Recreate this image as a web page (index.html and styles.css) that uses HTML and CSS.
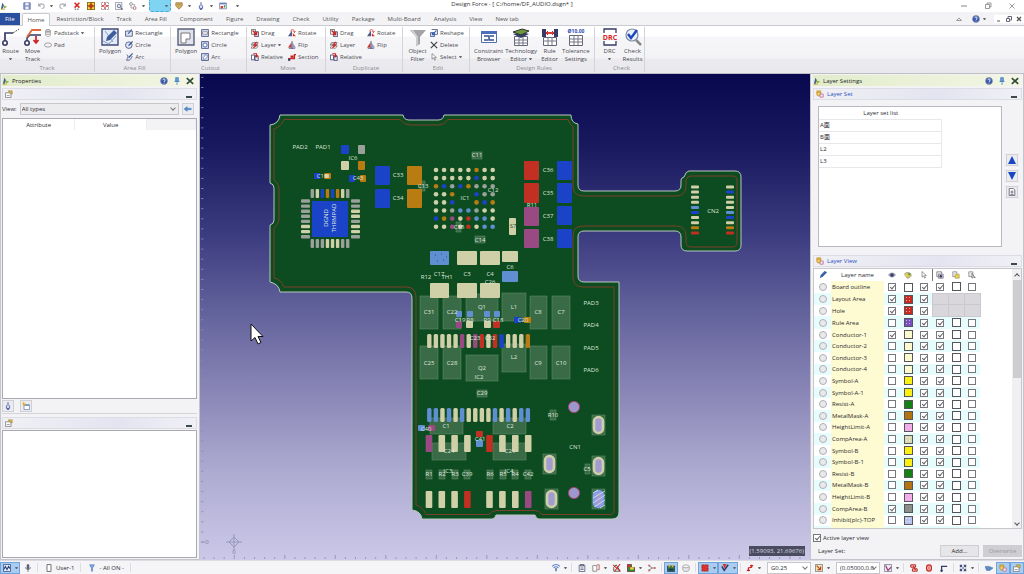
FILE: index.html
```html
<!DOCTYPE html>
<html lang="en">
<head>
    <meta charset="UTF-8">
    <title>Design Force</title>
    <link rel="stylesheet" href="styles.css">
</head>
<body>
    <svg class="sprite">
        <symbol id="i-logo" viewBox="0 0 10 10"><path d="M1 9l2-8 2 3-2 5z" fill="#3c5f9a"/><path d="M4 4l5 2-4 2z" fill="#8fae3a"/><path d="M1 9h5" stroke="#d8b23a" stroke-width="1.4"/></symbol>
        <symbol id="i-save" viewBox="0 0 10 10"><path d="M1 1h8v8H1z" fill="#8f9cc8" stroke="#5b6aa5"/><path d="M3 1h4v3H3zM3 6h4v3H3z" fill="#eef1fa"/></symbol>
        <symbol id="i-undo" viewBox="0 0 10 10"><path d="M2 2v3h3M2 5c2-4 7-3 7 0 0 2-1 3-3 3" fill="none" stroke="#a9a9b4" stroke-width="1.3"/></symbol>
        <symbol id="i-redo" viewBox="0 0 10 10"><path d="M8 2v3H5M8 5C6 1 1 2 1 5c0 2 1 3 3 3" fill="none" stroke="#a9a9b4" stroke-width="1.3"/></symbol>
        <symbol id="i-del" viewBox="0 0 10 10"><path d="M2 1l6 6M8 1L2 7" stroke="#d32a22" stroke-width="2"/><path d="M2 9h6" stroke="#333" stroke-dasharray="2 1"/></symbol>
        <symbol id="i-fit" viewBox="0 0 10 10"><path d="M0 0h10v10H0z" fill="#8a5a14"/><path d="M1 1h3v3H1zM6 1h3v3H6zM1 6h3v3H1zM6 6h3v3H6z" fill="#f4d23c"/><path d="M3 3h4v4H3z" fill="#c8281e"/></symbol>
        <symbol id="i-zoomall" viewBox="0 0 10 10"><path d="M.5.5h9v9h-9z" fill="#fff" stroke="#777" stroke-dasharray="2 1"/><path d="M5 1v8M1 5h8" stroke="#c33" stroke-width="1.6"/><path d="M4 4h2v2H4z" fill="#fff"/></symbol>
        <symbol id="i-find" viewBox="0 0 10 10"><path d="M.5.5h8v9h-8z" fill="#f5f6fa" stroke="#8a8fa3"/><circle cx="5" cy="5" r="2.2" fill="#dbe6f7" stroke="#667"/><path d="M7 7l2.500 2.500" stroke="#556" stroke-width="1.4"/></symbol>
        <symbol id="i-link" viewBox="0 0 10 10"><circle cx="2.500" cy="2.500" r="1.800" fill="none" stroke="#888"/><circle cx="7" cy="7.500" r="1.800" fill="none" stroke="#a55"/><path d="M2.500 4.500v3h2.500M5 3h2v2" fill="none" stroke="#999"/></symbol>
        <symbol id="i-shield" viewBox="0 0 10 10"><path d="M1 1h8v4L5 9 1 5z" fill="#c9b25a" stroke="#b06c54"/><path d="M3 3h4" stroke="#a5a04c" stroke-width="2"/></symbol>
        <symbol id="i-pin" viewBox="0 0 10 10"><path d="M5 0v3L3 5v3h4V5L5 3" fill="#dfe4f6" stroke="#3f4fa0"/><path d="M5 8v2" stroke="#3f4fa0" stroke-width="2"/></symbol>
        <symbol id="i-win" viewBox="0 0 10 10"><path d="M.5 1.500h9v7h-9z" fill="#fff" stroke="#6a83b8"/><path d="M1 2h8" stroke="#6a83b8" stroke-width="2"/><path d="M2 5h3v3H2z" fill="#d33"/><path d="M6 4h2v3H6z" fill="#3a9a4a"/></symbol>
        <symbol id="i-help" viewBox="0 0 10 10"><circle cx="5" cy="5" r="4.300" fill="#2f51a8" stroke="#8b95b5"/><path d="M3.500 4c0-2 3-2 3-.2C6.500 5 5 5 5 6.200M5 7v1" fill="none" stroke="#fff" stroke-width="1.200"/></symbol>
        <symbol id="i-tack" viewBox="0 0 10 10"><path d="M3 1h4v4H3z" fill="#7fb0e0"/><path d="M3 1h4M3.700 1v4M6.300 1v4M2 5.500h6" stroke="#4f86c4" stroke-width="1.400"/><path d="M5 6v4" stroke="#4f86c4"/></symbol>
        <symbol id="i-x" viewBox="0 0 10 10"><path d="M1 1.500l8 7M9 1.500l-8 7" stroke="#2c4a35" stroke-width="2"/></symbol>
        <symbol id="i-prop" viewBox="0 0 10 10"><path d="M.5 3.500h7v6h-7z" fill="#fff" stroke="#777"/><path d="M4 1h5v4L6 4z" fill="#d9b84a" stroke="#8a7a30" stroke-width=".6"/><path d="M2 7h4" stroke="#888"/></symbol>
        <symbol id="i-layers" viewBox="0 0 10 10"><path d="M1 1h5v3H1z" fill="#f2c23c" stroke="#a07820" stroke-width=".6"/><circle cx="3.500" cy="5" r="2.500" fill="#f6d45a" stroke="#b98a2a"/><path d="M5 5h4v4H5z" fill="#e9edf8" stroke="#c36a8a"/></symbol>
        <symbol id="i-hand" viewBox="0 0 10 10"><path d="M0 5l4-3v2h5v2H4v2z" fill="#4c8fd0" stroke="#3a6ea8" stroke-width=".5"/></symbol>
        <symbol id="i-new" viewBox="0 0 10 10"><path d="M2.500 3.500h7v6h-7z" fill="#fff" stroke="#6b86b4"/><path d="M3 4h6" stroke="#6b86b4" stroke-width="1.500"/><path d="M2 0v5M0 2.500h5" stroke="#e4b92d" stroke-width="1.500"/></symbol>

        <symbol id="i-route" viewBox="0 0 18 18"><circle cx="3" cy="15" r="2.200" fill="#fff" stroke="#353a66" stroke-width="1.600"/><path d="M3 13V5h8" fill="none" stroke="#353a66" stroke-width="1.700"/><path d="M11 5l6-4" stroke="#555" stroke-dasharray="2 1"/></symbol>
        <symbol id="i-move" viewBox="0 0 18 18"><circle cx="3" cy="15" r="2.200" fill="#fff" stroke="#353a66" stroke-width="1.600"/><path d="M3 13v-3l3-3h11" fill="none" stroke="#353a66" stroke-width="1.500"/><path d="M3 9l5-7h9" fill="none" stroke="#e0683a" stroke-width="1.800"/><path d="M12 8v7M9.500 12l2.500 3 2.500-3" fill="none" stroke="#d02020" stroke-width="1.700"/></symbol>
        <symbol id="i-poly" viewBox="0 0 18 18"><path d="M1 1h16v16H1z" fill="#e3ebf6" stroke="#414a7a" stroke-width="1.400"/><path d="M4 3l8 11M2 13l6 3 7-8" fill="none" stroke="#88a0c8"/><path d="M13 2l3 3-7 7-4 1 1-4z" fill="#3c5c9c"/></symbol>
        <symbol id="i-cut" viewBox="0 0 18 18"><path d="M1 1h16v16H1z" fill="#dfe3ee" stroke="#5a6078" stroke-width="1.400"/><path d="M4 5h9v6H9v4H4z" fill="#fff" stroke="#777"/></symbol>
        <symbol id="i-filter" viewBox="0 0 18 18"><path d="M1 2h16l-6 7v7l-4 2V9z" fill="#a3a3a8"/><path d="M3 2l5 7v8" fill="none" stroke="#d8d8dc" stroke-width="1.500"/></symbol>
        <symbol id="i-cons" viewBox="0 0 18 18"><path d="M1.500 3.500h15v11h-15z" fill="#fff" stroke="#5570b0"/><path d="M1 3h16v3H1z" fill="#4c70bd"/><path d="M4 8h5v4h5M4 12h4M10 8h4" fill="none" stroke="#33508c" stroke-width="1.500"/></symbol>
        <symbol id="i-tech" viewBox="0 0 18 18"><path d="M2.500 8.500h13v9h-13z" fill="#fff" stroke="#667"/><path d="M2 12h14M2 15h14M7 8v9M11 8v9" stroke="#778"/><path d="M1 6l9-2 7 2-8 4z" fill="#33406c"/><path d="M1 4l9-3 7 2-8 4z" fill="#6e9a3d" stroke="#333"/></symbol>
        <symbol id="i-rule" viewBox="0 0 18 18"><path d="M1 1h4v8H1zM13 1h4v8h-4z" fill="#353a66"/><path d="M5 5h8" stroke="#d42a22" stroke-width="1.800"/><path d="M7 3L5 5l2 2M11 3l2 2-2 2" fill="none" stroke="#d42a22"/><path d="M2.500 9.500h13v8h-13z" fill="#fff" stroke="#667"/><path d="M2 13h14M7 9v8M11 9v8" stroke="#778"/></symbol>
        <symbol id="i-check" viewBox="0 0 18 18"><circle cx="8" cy="7" r="6" fill="#eaf1fb" stroke="#7f8ca6" stroke-width="1.200"/><path d="M12 12l5 5" stroke="#888" stroke-width="2.500"/><path d="M4 6l3 4 6-8" fill="none" stroke="#1d48b8" stroke-width="2.400"/></symbol>

        <symbol id="i-padstack" viewBox="0 0 10 10"><ellipse cx="5" cy="2" rx="3" ry="1.300" fill="#ddd" stroke="#888"/><path d="M2 4c1 1 5 1 6 0M2 6c1 1 5 1 6 0M2 8c1 1.500 5 1.500 6 0M2 2v6M8 2v6" fill="none" stroke="#999"/></symbol>
        <symbol id="i-pad" viewBox="0 0 10 10"><ellipse cx="5" cy="5" rx="4.400" ry="2.600" fill="#f6f6fa" stroke="#8a8a96"/></symbol>
        <symbol id="i-srect" viewBox="0 0 10 10"><path d="M.7 2.500h8.500v6.500H.7z" fill="#dfe8f6" stroke="#414a7a"/><path d="M8 0L4 5 3 7l2-1 4-5z" fill="#3c5c9c"/></symbol>
        <symbol id="i-scirc" viewBox="0 0 10 10"><circle cx="4.800" cy="5.200" r="4.100" fill="#dfe8f6" stroke="#414a7a"/><path d="M9 0L5 4 4 6.500l2-1L10 1z" fill="#3c5c9c"/></symbol>
        <symbol id="i-sarc" viewBox="0 0 10 10"><path d="M2 2c3 2 1 4 0 7 5 1 6-3 7-5" fill="#dfe8f6" stroke="#414a7a"/><path d="M9 0L5 4 4 6.500l2-1L10 1z" fill="#3c5c9c"/></symbol>
        <symbol id="i-crect" viewBox="0 0 10 10"><path d="M.7.7h8.600v8.600H.7z" fill="#d6def0" stroke="#414a7a"/><path d="M2 3.500h6v3H2z" fill="#fff" stroke="#556" stroke-width=".7"/></symbol>
        <symbol id="i-ccirc" viewBox="0 0 10 10"><path d="M.7.7h8.600v8.600H.7z" fill="#d6def0" stroke="#414a7a"/><circle cx="5" cy="5" r="2.600" fill="#fff" stroke="#3452a0"/></symbol>
        <symbol id="i-carc" viewBox="0 0 10 10"><path d="M.7.7h8.600v8.600H.7z" fill="#d6def0" stroke="#414a7a"/><path d="M3 8C2 4 5 6 5 2l3 1c0 3-2 5-5 5z" fill="#fff" stroke="#3452a0" stroke-width=".7"/></symbol>
        <symbol id="i-drag" viewBox="0 0 10 10"><path d="M.5.5h5v6h-5z" fill="#fff" stroke="#555"/><path d="M4.500 3.500h5v6h-5z" fill="#e6ebf6" stroke="#353a66"/><path d="M2 2l5 5M7 3.500V7H3.500" fill="none" stroke="#d2201c" stroke-width="1.800"/></symbol>
        <symbol id="i-layer" viewBox="0 0 10 10"><path d="M2 2h7L7 5H0z" fill="#c9cfe0" stroke="#444" stroke-width=".7"/><path d="M2 6h7L7 9H0z" fill="#fff" stroke="#444" stroke-width=".7"/><path d="M7 1L4 5h3L3 8.500" fill="none" stroke="#d2201c" stroke-width="1.500"/></symbol>
        <symbol id="i-rel" viewBox="0 0 10 10"><path d="M.5 2.500h4v6h-4z" fill="#fff" stroke="#353a66"/><path d="M5 4h4v5.500H5z" fill="#e6ebf6" stroke="#353a66"/><path d="M3 1h4v3M5.500 3L7 5l1.500-2" fill="none" stroke="#d2201c" stroke-width="1.300"/></symbol>
        <symbol id="i-rot" viewBox="0 0 10 10"><path d="M5 2v7H0z" fill="#52598a"/><path d="M6 5l4 4H6z" fill="#d2342c"/><path d="M3 3c1-3 5-3 5 1M9.500 3L8 4.500 6.500 3" fill="none" stroke="#d2201c"/></symbol>
        <symbol id="i-flip" viewBox="0 0 10 10"><path d="M4.300 2v6H0z" fill="#d2342c"/><path d="M5.700 2v6H10z" fill="#9aa0c4"/><path d="M5 0v10M1 9h8" stroke="#353a66"/></symbol>
        <symbol id="i-sect" viewBox="0 0 10 10"><path d="M1 9V7h3V4h2V7h2V2h2" fill="none" stroke="#c9241e" stroke-width="1.700"/><circle cx="1.500" cy="8.500" r="1.500" fill="#353a66"/></symbol>
        <symbol id="i-reshape" viewBox="0 0 10 10"><path d="M2 .7h7.300v6H6" fill="none" stroke="#414a7a"/><path d="M.7 4.500h5v5h-5z" fill="#dfe8f6" stroke="#414a7a"/><path d="M8 2L3 7M3 4.500V7h2.500" fill="none" stroke="#2e62b8" stroke-width="1.400"/></symbol>
        <symbol id="i-delete" viewBox="0 0 10 10"><path d="M1 1l8 8M9 1L1 9" stroke="#444" stroke-width="1.500"/></symbol>
        <symbol id="i-cursor" viewBox="0 0 10 10"><path d="M2.500.7v7l2-1.700 1.300 3 1-.5L5.700 5.700h2.300z" fill="#fff" stroke="#666" stroke-width=".8"/></symbol>

        <symbol id="i-eye" viewBox="0 0 10 10"><path d="M0 5c3-4 7-4 10 0-3 4-7 4-10 0z" fill="#aab"/><circle cx="5" cy="5" r="2.300" fill="#3a3f6c"/></symbol>
        <symbol id="i-pal" viewBox="0 0 10 10"><path d="M1 4c0-3 8-3 8 1 0 3-3 4-5 4 0-2-3-2-3-5z" fill="#d8c65a" stroke="#998"/><path d="M5 3h3v2H5z" fill="#5a9a3c"/><path d="M2 4h2v2H2z" fill="#e8e26a"/></symbol>
        <symbol id="i-pen" viewBox="0 0 10 10"><path d="M9 1L7 0 2 5 1 9l4-2 5-5z" fill="#3b62a4"/></symbol>
        <symbol id="i-seteye" viewBox="0 0 10 10"><path d="M1 1h6v6H1z" fill="#eee" stroke="#777"/><path d="M3 4h6v5H3z" fill="#ccd" stroke="#778"/><circle cx="6" cy="6.500" r="1.500" fill="#335"/></symbol>
        <symbol id="i-setpal" viewBox="0 0 10 10"><path d="M1 1h5v6H1z" fill="#eee" stroke="#888"/><path d="M4 4h5v5H4z" fill="#e8cf50" stroke="#b8a860"/></symbol>
        <symbol id="i-setcur" viewBox="0 0 10 10"><path d="M1 1h5v6H1z" fill="#eee" stroke="#888"/><path d="M5 3v6l2-1.500 2 1z" fill="#fff" stroke="#666"/></symbol>

        <symbol id="i-panel" viewBox="0 0 10 10"><path d="M.5.500h9v9h-9z" fill="#e8effa" stroke="#2c4680"/><path d="M1 7l2-4 2 4 2-4 2 3" fill="none" stroke="#2c4680" stroke-width="1.400"/></symbol>
        <symbol id="i-mic" viewBox="0 0 10 10"><path d="M4 1h2v5H4z" fill="#4a5178" stroke="#4a5178"/><path d="M2 4c0 4 6 4 6 0M5 7v3" fill="none" stroke="#666"/></symbol>
        <symbol id="i-user" viewBox="0 0 10 10"><path d="M2.500.7h5v8.600h-5z" fill="#fff" stroke="#555"/></symbol>
        <symbol id="i-y" viewBox="0 0 10 10"><path d="M2 1h6L5.700 5v4H4.300V5z" fill="#7da7dc" stroke="#4a74b4" stroke-width=".7"/></symbol>
        <symbol id="i-wifi" viewBox="0 0 10 10"><path d="M0 3c3-3 7-3 10 0M2 5c2-2 4-2 6 0" fill="none" stroke="#5c86c8" stroke-width="1.400"/><path d="M5 5v4" stroke="#3b5a98" stroke-width="1.600"/></symbol>
        <symbol id="i-clip" viewBox="0 0 10 10"><path d="M1.500 1.500h7v8h-7z" fill="#fff" stroke="#4a5070"/><path d="M3 .5h4v2H3zM3 5h4M3 7h4" fill="none" stroke="#4a5070"/></symbol>
        <symbol id="i-doc" viewBox="0 0 10 10"><path d="M1 2h5v7H1z" fill="#fff" stroke="#777"/><path d="M6 1h3v6H7" fill="none" stroke="#c44"/></symbol>
        <symbol id="i-cross" viewBox="0 0 10 10"><path d="M1 9V4l3-3 5 8z" fill="#fff" stroke="#333"/><path d="M0 1l9 8M9 0L2 9" stroke="#c8241e" stroke-width="1.300"/></symbol>
        <symbol id="i-area" viewBox="0 0 10 10"><path d="M.5.500h5v4h4v5h-9z" fill="#2c8a3c" stroke="#6b2a20"/><path d="M4 4h4.500v3H4z" fill="#f2d03c"/><path d="M1 1h3v3H1z" fill="#d8302a"/></symbol>
        <symbol id="i-net" viewBox="0 0 10 10"><path d="M1 2l4 3-4 3M5 5h4" fill="none" stroke="#666"/><circle cx="1.500" cy="2" r="1.300" fill="#c66"/><circle cx="1.500" cy="8" r="1.300" fill="#c66"/><circle cx="8.500" cy="5" r="1.300" fill="#c66"/></symbol>
        <symbol id="i-brd" viewBox="0 0 10 10"><path d="M.5 2.500h9v7h-9z" fill="#2e7a3c" stroke="#24386c"/><path d="M2 1h2v3H2zM6 1h2v3H6z" fill="#e0b838"/><path d="M2 6h6v2H2z" fill="#20305c"/></symbol>
        <symbol id="i-disk" viewBox="0 0 10 10"><path d="M1 3v4c0 3 8 3 8 0V3" fill="#e8e8ec" stroke="#999"/><ellipse cx="5" cy="3" rx="4" ry="1.800" fill="#fafafa" stroke="#999"/></symbol>
        <symbol id="i-redsel" viewBox="0 0 10 10"><path d="M1 1h8v8H1z" fill="#d8332c" stroke="#8c1c1c" stroke-dasharray="1 1"/></symbol>
        <symbol id="i-redv" viewBox="0 0 10 10"><path d="M1 3l3 5 5-7" fill="none" stroke="#353a66" stroke-width="2"/><path d="M2 0h5L4.500 6z" fill="#d8332c"/></symbol>
        <symbol id="i-zig" viewBox="0 0 10 10"><path d="M7 1v3L3 5v4M5 2h4M1 8h4" fill="none" stroke="#c8241e" stroke-width="1.500"/></symbol>
        <symbol id="i-snap" viewBox="0 0 10 10"><path d="M.5.5h9v9h-9z" fill="#f2e7bb" stroke="#777"/><path d="M2 2l5 5M7 3v4H3" fill="none" stroke="#b8481e" stroke-width="1.500"/></symbol>
        <symbol id="i-snap2" viewBox="0 0 10 10"><path d="M.5.5h9v9h-9z" fill="#e7ebf8" stroke="#778"/><path d="M2 2l3 6 4-4" fill="none" stroke="#a23270" stroke-width="1.500"/></symbol>
        <symbol id="i-red1" viewBox="0 0 10 10"><path d="M1 1h6v3H1zM3 6h6v3H3zM4 2l3 6" fill="#f3c9c5" stroke="#b8211c" stroke-width="1.200"/></symbol>
        <symbol id="i-red2" viewBox="0 0 10 10"><rect x="2" y="1" width="6" height="8" rx="3" fill="#f3c9c5" stroke="#c8241e" stroke-width="1.500"/><path d="M5 3v4" stroke="#c8241e"/></symbol>
        <symbol id="i-corner" viewBox="0 0 10 10"><path d="M2 9V3h7" fill="none" stroke="#353a66" stroke-width="1.600"/><circle cx="2" cy="8.500" r="1.500" fill="#353a66"/></symbol>
        <symbol id="i-star" viewBox="0 0 10 10"><path d="M1 1h3v2L3 4H1zM9 1H6v2l1 1h2zM1 9h3V7L3 6H1zM9 9H6V7l1-1h2z" fill="#46507a"/><path d="M5 4v2M4 5h2" stroke="#46507a"/></symbol>
        <symbol id="i-point" viewBox="0 0 10 10"><path d="M0 3h5l5 2-4 3H2z" fill="#5b8cc6" stroke="#3a6298" stroke-width=".6"/></symbol>
        <symbol id="i-page" viewBox="0 0 10 10"><path d="M1.500.5h5l2 2v7h-7z" fill="#fff" stroke="#556"/><path d="M3 5h4M5 3v4M3 8h4" stroke="#556"/></symbol>
    </svg>

    <header class="titlebar">
        <div class="quick">
            <svg class="ico"><use href="#i-logo"/></svg>
            <button class="q first" aria-label="Save"><svg class="ico"><use href="#i-save"/></svg></button>
            <button class="q drop" aria-label="Undo"><svg class="ico"><use href="#i-undo"/></svg><i class="caret"></i></button>
            <button class="q" aria-label="Redo"><svg class="ico"><use href="#i-redo"/></svg></button>
            <button class="q" aria-label="Clear"><svg class="ico"><use href="#i-del"/></svg></button>
            <button class="q" aria-label="Fit"><svg class="ico"><use href="#i-fit"/></svg></button>
            <button class="q" aria-label="Zoom all"><svg class="ico"><use href="#i-zoomall"/></svg></button>
            <button class="q" aria-label="Find"><svg class="ico"><use href="#i-find"/></svg></button>
            <button class="q drop" aria-label="Link"><svg class="ico"><use href="#i-link"/></svg><i class="caret"></i></button>
            <button class="q drop hot" aria-label="Highlight"><i class="caret"></i></button>
            <button class="q drop" aria-label="Shield"><svg class="ico"><use href="#i-shield"/></svg><i class="caret"></i></button>
            <button class="q drop" aria-label="Marker"><svg class="ico"><use href="#i-pin"/></svg><i class="caret"></i></button>
            <button class="q" aria-label="Window"><svg class="ico"><use href="#i-win"/></svg></button>
            <button class="q" aria-label="More"><i class="caret"></i></button>
        </div>
        <h1>Design Force - [ C:/home/DF_AUDIO.dsgn* ]</h1>
        <div class="winbtns">
            <button aria-label="Minimize"><svg class="ico"><path d="M1 4h6" stroke="#888"/></svg></button>
            <button aria-label="Restore"><svg class="ico"><path d="M1.500 2.500h4v4h-4zM3 2V1h4v4H6" fill="none" stroke="#999"/></svg></button>
            <button aria-label="Close"><svg class="ico"><path d="M1.500 1.500l5 5M6.500 1.500l-5 5" stroke="#999"/></svg></button>
        </div>
    </header>

    <nav class="tabs">
        <a class="file" href="#">File</a>
        <a class="on" href="#">Home</a>
        <a href="#">Restriction/Block</a>
        <a href="#">Track</a>
        <a href="#">Area Fill</a>
        <a href="#">Component</a>
        <a href="#">Figure</a>
        <a href="#">Drawing</a>
        <a href="#">Check</a>
        <a href="#">Utility</a>
        <a href="#">Package</a>
        <a href="#">Multi-Board</a>
        <a href="#">Analysis</a>
        <a href="#">View</a>
        <a href="#">New tab</a>
        <div class="mdi">
            <button aria-label="Collapse"><svg class="ico"><path d="M1.500 5.500L4 3l2.500 2.500z" fill="none" stroke="#999"/></svg></button>
            <button class="wide" aria-label="Help"><svg class="ico"><use href="#i-help"/></svg><i class="caret"></i></button>
            <button class="box" aria-label="Minimize document"><svg class="ico"><path d="M2 6h3" stroke="#555"/></svg></button>
            <button class="box" aria-label="Restore document"><svg class="ico"><path d="M1.500 3.500h3v3h-3zM3 3V1.500h3.500V5H5" fill="none" stroke="#667"/></svg></button>
            <button class="box" aria-label="Close document"><svg class="ico"><path d="M2 2l4 4M6 2L2 6" stroke="#555" stroke-width="1.300"/></svg></button>
        </div>
    </nav>

    <div class="ribbon">
        <section class="group g-track">
            <div class="tools">
                <button class="big"><svg><use href="#i-route"/></svg>Route<i class="caret"></i></button>
                <button class="big"><svg><use href="#i-move"/></svg>Move<br>Track</button>
                <div class="stack">
                    <button><svg class="ico"><use href="#i-padstack"/></svg>Padstack<i class="caret"></i></button>
                    <button><svg class="ico"><use href="#i-pad"/></svg>Pad</button>
                </div>
            </div>
            <h2>Track</h2>
        </section>
        <section class="group g-fill">
            <div class="tools">
                <button class="big"><svg><use href="#i-poly"/></svg>Polygon</button>
                <div class="stack">
                    <button><svg class="ico"><use href="#i-srect"/></svg>Rectangle</button>
                    <button><svg class="ico"><use href="#i-scirc"/></svg>Circle</button>
                    <button><svg class="ico"><use href="#i-sarc"/></svg>Arc</button>
                </div>
            </div>
            <h2>Area Fill</h2>
        </section>
        <section class="group g-fill">
            <div class="tools">
                <button class="big"><svg><use href="#i-cut"/></svg>Polygon</button>
                <div class="stack">
                    <button><svg class="ico"><use href="#i-crect"/></svg>Rectangle</button>
                    <button><svg class="ico"><use href="#i-ccirc"/></svg>Circle</button>
                    <button><svg class="ico"><use href="#i-carc"/></svg>Arc</button>
                </div>
            </div>
            <h2>Cutout</h2>
        </section>
        <section class="group g-move">
            <div class="tools">
                <div class="stack">
                    <button><svg class="ico"><use href="#i-drag"/></svg>Drag</button>
                    <button><svg class="ico"><use href="#i-layer"/></svg>Layer<i class="caret"></i></button>
                    <button><svg class="ico"><use href="#i-rel"/></svg>Relative</button>
                </div>
                <div class="stack">
                    <button><svg class="ico"><use href="#i-rot"/></svg>Rotate</button>
                    <button><svg class="ico"><use href="#i-flip"/></svg>Flip</button>
                    <button><svg class="ico"><use href="#i-sect"/></svg>Section</button>
                </div>
            </div>
            <h2>Move</h2>
        </section>
        <section class="group g-dup">
            <div class="tools">
                <div class="stack">
                    <button><svg class="ico"><use href="#i-drag"/></svg>Drag</button>
                    <button><svg class="ico"><use href="#i-layer"/></svg>Layer</button>
                    <button><svg class="ico"><use href="#i-rel"/></svg>Relative</button>
                </div>
                <div class="stack">
                    <button><svg class="ico"><use href="#i-rot"/></svg>Rotate</button>
                    <button><svg class="ico"><use href="#i-flip"/></svg>Flip</button>
                </div>
            </div>
            <h2>Duplicate</h2>
        </section>
        <section class="group g-edit">
            <div class="tools">
                <button class="big"><svg><use href="#i-filter"/></svg>Object<br>Filter</button>
                <div class="stack">
                    <button><svg class="ico"><use href="#i-reshape"/></svg>Reshape</button>
                    <button><svg class="ico"><use href="#i-delete"/></svg>Delete</button>
                    <button><svg class="ico"><use href="#i-cursor"/></svg>Select<i class="caret"></i></button>
                </div>
            </div>
            <h2>Edit</h2>
        </section>
        <section class="group g-rules">
            <div class="tools">
                <button class="big"><svg><use href="#i-cons"/></svg>Constraint<br>Browser</button>
                <button class="big"><svg><use href="#i-tech"/></svg>Technology<span>Editor<i class="caret"></i></span></button>
                <button class="big"><svg><use href="#i-rule"/></svg>Rule<br>Editor</button>
                <button class="big"><svg viewBox="0 0 18 18"><text class="tol" x="9" y="5">Ø10.00</text><path d="M2.500 7.500h13v10h-13z" fill="#fff" stroke="#667"/><path d="M2 11h14M2 14h14M7 7v10M11 7v10" stroke="#778"/></svg>Tolerance<br>Settings</button>
            </div>
            <h2>Design Rules</h2>
        </section>
        <section class="group g-check">
            <div class="tools">
                <button class="big"><svg viewBox="0 0 18 18"><path d="M3 5V1h12v4M3 13v4h12v-4" fill="#fff" stroke="#353a66" stroke-width="1.300"/><text class="drc" x="9" y="12">DRC</text></svg>DRC<i class="caret"></i></button>
                <button class="big"><svg><use href="#i-check"/></svg>Check<br>Results</button>
            </div>
            <h2>Check</h2>
        </section>
    </div>

    <main>
        <aside class="left">
            <div class="dock-title">
                <svg class="ico"><use href="#i-logo"/></svg><b>Properties</b>
                <svg class="ico"><use href="#i-help"/></svg><svg class="ico"><use href="#i-tack"/></svg><svg class="ico"><use href="#i-x"/></svg>
            </div>
            <div class="strip"><svg class="ico"><use href="#i-prop"/></svg><i class="min"></i></div>
            <div class="viewrow">
                <label for="view">View:</label>
                <div class="sel"><select id="view"><option>All types</option></select></div>
                <button aria-label="Pick"><svg class="ico"><use href="#i-hand"/></svg></button>
            </div>
            <div class="attrs">
                <table>
                    <tr><th>Attribute</th><th>Value</th><th></th></tr>
                </table>
            </div>
            <div class="minibar">
                <button aria-label="Marker"><svg class="ico"><use href="#i-pin"/></svg></button>
                <button aria-label="New"><svg class="ico"><use href="#i-new"/></svg></button>
            </div>
            <div class="strip second"><svg class="ico"><use href="#i-prop"/></svg><i class="min"></i></div>
            <div class="blank"></div>
        </aside>

        <div class="canvas">
            <svg id="board" viewBox="200 74 610 486" preserveAspectRatio="xMinYMin meet">
                <path class="edge" d="M280 115H403Q404 120 409 120H438Q443 120 444 115H571Q571 123 578 124V185Q578 191 584 191H675Q681 191 681 185V180Q681 178 684 177 686 171 689 171H735Q741 171 741 177V245Q741 251 735 251H687Q681 251 681 245V237Q681 231 675 231H584Q578 231 578 237V276Q578 282 584 282H619V512Q619 519 612 519H539Q536 519 535 515H496Q495 519 492 519H422Q421 511 412 510V298Q412 292 406 292H280Q279 284 270 282V225Q274 224 274 220V188Q274 184 270 183V125Q279 124 280 115Z"/>
                <path class="keep" d="M284 119.500H400Q404 125 410 125H439Q444 125 448 119.500H568Q570 125 573 127V186Q573 196 583 196H676Q686 196 686 186V180Q687 176 691 176H732Q737 176 737 180V242Q737 247 732 247H691Q686 247 686 242V236Q686 226 676 226H583Q573 226 573 236V277Q573 287 583 287H614V510Q614 514.500 610 514.500H542Q539 510.500 535 510.500H496Q492 510.500 489 514.500H426Q423 507 416 505V297Q416 287 406 287H284Q281 279 274 278V228Q278 225 279 220V188Q278 182 274 180V129Q282 126 284 119.500Z"/>
            </svg>
            <div class="coords">(1.59093, 21.69676)</div>
        </div>

        <aside class="right">
            <div class="dock-title">
                <svg class="ico"><use href="#i-logo"/></svg><b>Layer Settings</b>
                <svg class="ico"><use href="#i-help"/></svg><svg class="ico"><use href="#i-tack"/></svg><svg class="ico"><use href="#i-x"/></svg>
            </div>
            <div class="strip"><svg class="ico"><use href="#i-layers"/></svg>Layer Set<i class="min"></i></div>
            <div class="setarea">
                <div class="setlist">
                    <table>
                        <tr><th>Layer set list</th></tr>
                        <tr><td>A面</td></tr>
                        <tr><td>B面</td></tr>
                        <tr><td>L2</td></tr>
                        <tr><td>L3</td></tr>
                    </table>
                </div>
                <div class="setbtns">
                    <button aria-label="Up"><svg class="ico"><path d="M4 0l4 8H0z" fill="#1c46c0"/></svg></button>
                    <button aria-label="Down"><svg class="ico"><path d="M4 8l4-8H0z" fill="#1c46c0"/></svg></button>
                    <button aria-label="Details"><svg class="ico"><use href="#i-page"/></svg></button>
                </div>
            </div>
            <div class="strip"><svg class="ico"><use href="#i-layers"/></svg>Layer View<i class="min"></i></div>
            <div class="layers">
                <table>
                    <thead>
                        <tr>
                            <th class="c-pen"><svg class="ico"><use href="#i-pen"/></svg></th>
                            <th class="c-name">Layer name</th>
                            <th><svg class="ico"><use href="#i-eye"/></svg></th>
                            <th><svg class="ico"><use href="#i-pal"/></svg></th>
                            <th><svg class="ico"><use href="#i-cursor"/></svg></th>
                            <th class="split"><svg class="ico"><use href="#i-seteye"/></svg></th>
                            <th><svg class="ico"><use href="#i-setpal"/></svg></th>
                            <th><svg class="ico"><use href="#i-setcur"/></svg></th>
                        </tr>
                    </thead>
                    <tbody id="rows"></tbody>
                </table>
                <div class="scroll"><i class="arrow up"></i><div class="thumb"></div><i class="arrow"></i></div>
            </div>
            <div class="active"><input type="checkbox" id="alv" checked><label for="alv">Active layer view</label></div>
            <div class="setrow">
                <span>Layer Set:</span>
                <button>Add...</button>
                <button disabled>Overwrite</button>
            </div>
        </aside>
    </main>

    <footer>
        <button class="s drop on" aria-label="Panel"><svg class="ico"><use href="#i-panel"/></svg><i class="caret"></i></button>
        <button class="s" aria-label="Voice"><svg class="ico"><use href="#i-mic"/></svg></button>
        <i class="sep"></i>
        <span class="who"><svg class="ico"><use href="#i-user"/></svg>User-1</span>
        <i class="sep"></i>
        <span class="who"><svg class="ico"><use href="#i-y"/></svg>- All ON -</span>
        <i class="sep"></i>
        <div class="snaps">
            <button class="s drop" aria-label="Signal"><svg class="ico"><use href="#i-wifi"/></svg><i class="caret"></i></button>
            <i class="sep"></i>
            <button class="s" aria-label="Clipboard"><svg class="ico"><use href="#i-clip"/></svg></button>
            <button class="s drop" aria-label="Document"><svg class="ico"><use href="#i-doc"/></svg><i class="caret"></i></button>
            <button class="s" aria-label="Cut"><svg class="ico"><use href="#i-cross"/></svg></button>
            <button class="s drop" aria-label="Area"><svg class="ico"><use href="#i-area"/></svg><i class="caret"></i></button>
            <button class="s" aria-label="Net"><svg class="ico"><use href="#i-net"/></svg></button>
            <i class="sep"></i>
            <button class="s on" aria-label="Board"><svg class="ico"><use href="#i-brd"/></svg></button>
            <button class="s" aria-label="Disk"><svg class="ico"><use href="#i-disk"/></svg></button>
            <i class="sep"></i>
            <button class="s drop on" aria-label="Selection"><svg class="ico"><use href="#i-redsel"/></svg><i class="caret"></i></button>
            <button class="s drop on" aria-label="Via"><svg class="ico"><use href="#i-redv"/></svg><i class="caret"></i></button>
            <i class="sep"></i>
            <button class="s drop" aria-label="Angle"><svg class="ico"><use href="#i-zig"/></svg><i class="caret"></i></button>
            <div class="sel"><select aria-label="Grid"><option>G0.25</option></select></div>
            <button class="s drop" aria-label="Snap"><svg class="ico"><use href="#i-snap"/></svg><i class="caret"></i></button>
            <div class="sel"><select aria-label="Pitch"><option>(0.05000,0.0</option></select></div>
            <button class="s drop" aria-label="Snap mode"><svg class="ico"><use href="#i-snap2"/></svg><i class="caret"></i></button>
            <i class="sep"></i>
            <button class="s" aria-label="Online check"><svg class="ico"><use href="#i-red1"/></svg></button>
            <button class="s" aria-label="Pad check"><svg class="ico"><use href="#i-red2"/></svg></button>
            <button class="s" aria-label="Corner"><svg class="ico"><use href="#i-corner"/></svg></button>
            <i class="sep"></i>
            <button class="s drop" aria-label="Center"><svg class="ico"><use href="#i-star"/></svg><i class="caret"></i></button>
            <i class="sep"></i>
            <button class="s" aria-label="Point"><svg class="ico"><use href="#i-point"/></svg></button>
            <button class="s on" aria-label="Layers"><svg class="ico"><use href="#i-layers"/></svg></button>
            <button class="s on" aria-label="Properties"><svg class="ico"><use href="#i-prop"/></svg></button>
        </div>
    </footer>
    <script src="app.js"></script>
</body>
</html>
```
FILE: styles.css
```css
*{
    margin: 0;
    padding: 0;
    box-sizing: border-box;
}
html,body{
    height: 100%;
}
body{
    display: flex;
    flex-direction: column;
    overflow: hidden;
    background: #f3f3f6;
    color: #2b2b30;
    font: 6px/8px "Open Sans","Noto Sans","Noto Sans CJK JP",sans-serif;
}
button,select,input{
    font: inherit;
    color: inherit;
}
button{
    border: 0;
    background: none;
}
a{
    color: inherit;
    text-decoration: none;
}
i{
    font-style: normal;
}
h1,h2{
    font-size: 6px;
    font-weight: normal;
}
table{
    border-collapse: collapse;
}
th{
    font-weight: normal;
}
.sprite{
    position: absolute;
    width: 0;
    height: 0;
}
.ico{
    width: 8px;
    height: 8px;
    flex: none;
    display: block;
}
.caret{
    display: inline-block;
    flex: none;
    border: 1px solid transparent;
    border-top: 2px solid #666;
    border-bottom: 0;
    width: 3px;
    height: 2px;
}

/* title bar */
.titlebar{
    height: 12px;
    background: #fff;
    display: grid;
    grid-template-columns: 1fr auto 1fr;
    align-items: center;
}
.titlebar h1{
    color: #333;
    align-self: start;
}
.quick{
    display: flex;
    align-items: center;
    height: 12px;
}
.q{
    width: 14px;
    height: 10px;
    flex: none;
    display: flex;
    align-items: center;
    justify-content: center;
}
.q.first{
    margin-left: 12px;
}
.q.drop{
    width: 22px;
    justify-content: space-around;
}
.q.hot{
    height: 12px;
    margin: 0 1px;
    background: #7fd4f4;
    border: 1px dashed #4aa8d8;
    border-top: 0;
    border-radius: 0 0 3px 3px;
    justify-content: flex-end;
    padding-right: 2px;
}
.winbtns{
    display: flex;
    justify-content: flex-end;
}
.winbtns button{
    width: 24px;
    display: flex;
    justify-content: center;
}

/* tabs */
.tabs{
    height: 14px;
    background: #f3f3f6;
    border-bottom: 1px solid #c9c9d0;
    display: flex;
    align-items: flex-end;
    color: #555;
}
.tabs a{
    height: 12px;
    line-height: 12px;
    padding: 0 7px 0 6px;
}
.tabs .file{
    background: #2a4f9e;
    color: #fff;
    padding: 0 5px;
    margin-right: 2px;
}
.tabs .on{
    height: 13px;
    margin-bottom: -1px;
    background: #fff;
    border: 1px solid #c9c9d0;
    border-bottom: 0;
    border-radius: 2px 2px 0 0;
    padding: 0 5px;
}
.mdi{
    margin-left: auto;
    display: flex;
    align-items: center;
    height: 13px;
}
.mdi button{
    width: 10px;
    height: 8px;
    display: flex;
    align-items: center;
    justify-content: center;
}
.mdi .wide{
    width: 22px;
    margin: 0 4px;
    justify-content: space-evenly;
}
.mdi .box{
    background: #fff;
}

/* ribbon */
.ribbon{
    height: 48px;
    flex: none;
    display: flex;
    background: linear-gradient(#fff 0,#fff 10px,#f6f5f8 11px,#f3f3f6 32px,#ebeaee 33px,#e9e8ec);
    border-bottom: 1px solid #bdbdc4;
    color: #4a4a50;
}
.group{
    display: flex;
    flex-direction: column;
    border-right: 1px solid #d3d3da;
    margin: 1px 0;
    padding-left: 4px;
}
.group h2{
    text-align: center;
    color: #8c8c94;
    line-height: 8px;
}
.tools{
    flex: 1;
    display: flex;
    gap: 2px;
}
.g-track{
    width: 95px;
    padding-left: 0;
}
.g-track .tools{
    gap: 1px;
}
.g-fill{
    width: 76px;
}
.g-fill .tools{
    gap: 4px;
}
.g-move{
    width: 79px;
}
.g-dup{
    width: 77px;
}
.g-edit{
    width: 67px;
}
.g-rules{
    width: 125px;
}
.g-check{
    width: 50px;
}
.big{
    min-width: 21px;
    display: block;
    text-align: center;
    line-height: 8px;
    align-self: flex-start;
}
.big svg{
    display: block;
    width: 18px;
    height: 18px;
    margin: 1px auto;
}
.big .caret{
    display: block;
    margin: 3px auto 0;
}
.big span{
    display: flex;
    align-items: center;
    justify-content: center;
    gap: 2px;
}
.big span .caret{
    margin: 0;
}
.tol,.drc{
    font-weight: bold;
    text-anchor: middle;
}
.tol{
    font-size: 5px;
    fill: #2a49b0;
}
.drc{
    font-size: 7px;
    fill: #d8241c;
}
.stack button{
    height: 12px;
    display: flex;
    align-items: center;
    gap: 2px;
    white-space: nowrap;
}
.g-move .stack,.g-dup .stack{
    width: 35px;
}

/* main area */
main{
    flex: 1;
    min-height: 0;
    display: flex;
}
aside{
    display: flex;
    flex-direction: column;
    flex: none;
    padding: 1px;
    border: 1px solid #c4c4cc;
    border-top: 0;
    background: #f3f3f6;
}
.left{
    width: 200px;
    padding-right: 2px;
}
.right{
    width: 214px;
    padding-left: 2px;
}
.dock-title{
    height: 11px;
    display: flex;
    align-items: center;
    gap: 5px;
    background: linear-gradient(90deg,#e2eccb,#f3f6e4);
    padding-right: 3px;
}
.dock-title b{
    font-weight: normal;
    color: #222;
    flex: 1;
    margin-left: -3px;
}
.strip{
    height: 12px;
    flex: none;
    margin-top: 2px;
    display: flex;
    align-items: center;
    gap: 3px;
    padding: 0 4px 0 2px;
    background: linear-gradient(100deg,#f0f0f5,#e3e4f0 60%,#f0f0f6);
    border: 1px solid #dcdce4;
    color: #2c4ec0;
}
.min{
    width: 6px;
    height: 2px;
    background: #3d4a4a;
    margin: 5px 0 0 auto;
}
.viewrow{
    display: flex;
    align-items: center;
    gap: 3px;
    padding: 3px 3px 3px 0;
}
.sel{
    position: relative;
    height: 12px;
}
.sel select{
    appearance: none;
    width: 100%;
    height: 100%;
    border: 1px solid #c6c6cc;
    background: #fff;
    padding: 0 3px;
    display: block;
}
.sel::after{
    content: "";
    position: absolute;
    right: 4px;
    top: 3px;
    width: 3px;
    height: 3px;
    border: solid #777;
    border-width: 0 1px 1px 0;
    transform: rotate(45deg);
    pointer-events: none;
}
.viewrow .sel{
    flex: 1;
}
.viewrow select{
    background: #ececee;
    padding: 0 1px;
}
.viewrow button,.minibar button,.setbtns button{
    width: 12px;
    height: 12px;
    border: 1px solid #cfcfd6;
    background: #ececf0;
    display: flex;
    align-items: center;
    justify-content: center;
}
.attrs{
    flex: 1;
    background: #fff;
    border: 1px solid #a9a9b0;
}
.attrs table{
    width: 100%;
    table-layout: fixed;
}
.attrs th{
    height: 11px;
    border-right: 1px solid #eee;
}
.attrs th:last-child{
    background: #f3f3f5;
    width: 49px;
}
.minibar{
    display: flex;
    gap: 6px;
    height: 15px;
    align-items: center;
    border-bottom: 1px solid #d3d3da;
}
.second{
    margin-top: 3px;
}
.blank{
    height: 128px;
    background: #fff;
    border: 1px solid #a9a9b0;
    margin-top: 1px;
}

/* canvas */
.canvas{
    flex: 1;
    min-width: 0;
    position: relative;
    overflow: hidden;
    background: linear-gradient(#08084f,#19195f 15%,#3b3b80 33%,#60609a 48%,#8683b4 64%,#aeabd2 82%,#cbc8e8);
}
#board{
    display: block;
    width: 100%;
    height: 100%;
    font-size: 6px;
}
#board text{
    fill: #dfe6dc;
    text-anchor: middle;
}
.edge{
    fill: #0d4b20;
    stroke: #b9c9bd;
}
.keep{
    fill: none;
    stroke: #7a4128;
}
.body{
    fill: #9ab09c;
    fill-opacity: .32;
    stroke: #5f8a66;
    stroke-width: .6;
}
.ruler{
    stroke: #8d8db4;
    stroke-width: .8;
    fill: none;
}
#board .zero{
    fill: #777793;
}
#board .dark{
    fill: #2a4a34;
}
.coords{
    position: absolute;
    right: 5px;
    bottom: 4px;
    padding: 1px;
    background: #4b4b60;
    color: #d8d8e0;
}

/* layer set */
.setarea{
    display: flex;
    gap: 4px;
    padding: 6px 4px 8px 5px;
}
.setlist{
    flex: 1;
    height: 141px;
    background: #fff;
    border: 1px solid #b9b9c0;
}
.setlist table{
    width: 123px;
}
.setlist td,.setlist th{
    height: 12px;
    border: 1px solid #e8e8ec;
    border-width: 0 1px 1px 0;
    padding-left: 1px;
}
.setlist th{
    border-right: 0;
}
.setbtns{
    display: flex;
    flex-direction: column;
    gap: 4px;
    padding-top: 48px;
}
.right .strip ~ .strip{
    margin-top: 0;
}

/* layer view */
.layers{
    flex: 1;
    min-height: 0;
    overflow: hidden;
    display: flex;
    justify-content: space-between;
    align-items: flex-start;
    background: #fff;
    border: 1px solid #c6c6cc;
    margin-top: 1px;
}
.layers table{
    table-layout: fixed;
    width: 166px;
    height: 269px;
}
.layers th,.layers td{
    width: 16px;
    line-height: 8px;
    vertical-align: middle;
    white-space: nowrap;
}
.layers th{
    height: 12px;
}
.layers th .ico{
    margin: 0 auto;
}
.layers .c-pen{
    width: 17px;
}
.layers .c-name{
    width: 53px;
}
.layers .split{
    border-left: 1px solid #777;
}
.layers td:nth-child(2){
    background: #fefad2;
    padding-left: 1px;
}
#rows tr:nth-child(even){
    background: #e6fcfd;
}
#rows td.off{
    background: #d9d7dc;
    border: 1px solid #cbc9cf;
}
input{
    appearance: none;
    display: block;
    width: 8px;
    height: 8px;
    margin: 0 auto;
    border: 1px solid #77777d;
    background: #fff;
    position: relative;
}
input[type=radio]{
    border-radius: 4px;
    border-color: #b0b0b6;
    background: #e9e9ec;
}
input[type=checkbox]:checked::before{
    content: "";
    position: absolute;
    left: 2px;
    top: 0;
    width: 2px;
    height: 4px;
    border: solid #666;
    border-width: 0 1px 1px 0;
    transform: rotate(40deg);
}
.chip{
    display: block;
    width: 9px;
    height: 9px;
    margin: 0 auto;
    border: 1px solid #55555c;
    background: #fff;
}
.dots{
    background-image: radial-gradient(#ffffff99 1px,transparent 1px);
    background-size: 3px 3px;
}
.scroll{
    width: 9px;
    align-self: stretch;
    background: #f0f0f2;
    display: flex;
    flex-direction: column;
    align-items: center;
    padding: 5px 0 3px;
}
.thumb{
    width: 8px;
    height: 98px;
    background: #cdcdd0;
    margin: 2px 0 auto;
}
.arrow{
    width: 4px;
    height: 4px;
    border: solid #555;
    border-width: 0 1px 1px 0;
    transform: rotate(45deg);
}
.up{
    transform: rotate(225deg);
}
.active{
    display: flex;
    align-items: center;
    gap: 2px;
    height: 15px;
    padding-top: 2px;
}
.active input{
    margin: 0;
}
.setrow{
    display: flex;
    align-items: center;
    gap: 4px;
    height: 14px;
    padding-left: 5px;
}
.setrow span{
    margin-right: auto;
}
.setrow button{
    width: 39px;
    height: 12px;
    border: 1px solid #cdcdd2;
    background: #e6e6e9;
}
.setrow button:disabled{
    background: #cfcfd3;
    color: #98989e;
}

/* status bar */
footer{
    height: 14px;
    flex: none;
    display: flex;
    align-items: center;
    background: #f5f5f8;
    border-top: 1px solid #dcdce2;
}
.s{
    width: 15px;
    height: 12px;
    flex: none;
    display: flex;
    align-items: center;
    justify-content: center;
}
.s.drop{
    width: 20px;
    gap: 4px;
}
.s.on{
    background: #a9cdf2;
    border: 1px solid #6fa3da;
    width: 14px;
}
.s.drop.on{
    width: 20px;
}
.sep{
    width: 1px;
    height: 9px;
    margin: 0 2px;
    background: #dcdce2;
}
.who{
    display: flex;
    align-items: center;
    gap: 3px;
    padding: 0 4px 0 5px;
}
.snaps{
    margin-left: auto;
    display: flex;
    align-items: center;
}
.snaps .sel{
    width: 44px;
    margin: 0 1px 0 4px;
}
```
FILE: app.js
```javascript
var NS = 'http://www.w3.org/2000/svg';
var board = document.getElementById('board');
var col = {
    w: '#cfd0a8', g: '#9aa09a', b: '#1b43c8', o: '#b97c12',
    l: '#5f8fd0', m: '#9a4a82', r: '#c23024'
};

function add(tag, attrs, text) {
    var el = document.createElementNS(NS, tag);
    for (var k in attrs) {
        el.setAttribute(k, attrs[k]);
    }
    if (text) {
        el.textContent = text;
    }
    board.appendChild(el);
    return el;
}
function pad(c, x, y, w, h, r) {
    add('rect', {x: x, y: y, width: w, height: h, rx: r === undefined ? 1 : r, fill: col[c]});
}
function label(t, x, y) {
    return add('text', {x: x, y: y + 2}, t);
}
// a row of equal pads, one letter for each
function row(str, x, y, step, w, h, r) {
    for (var i = 0; i < str.length; i++) {
        if (str[i] != ' ') {
            pad(str[i], x + i * step - w / 2, y, w, h, r);
        }
    }
}
function column(str, x, y, step, w, h) {
    for (var i = 0; i < str.length; i++) {
        pad(str[i], x, y + i * step - h / 2, w, h);
    }
}
function ghost(x, y, w, h) {
    add('rect', {x: x, y: y, width: w, height: h, 'class': 'body'});
}

// rulers and origin
for (var y = 542; y > 76; y -= 10.1) {
    add('path', {d: 'M201 ' + y + 'h2.500', 'class': 'ruler'});
}
for (var x = 204, n = 2; x < 805; x += 10.1, n++) {
    add('path', {d: 'M' + x + ' 559v' + (n % 5 ? -2 : -4), 'class': 'ruler'});
}
add('path', {d: 'M226 542h16M234 534v16M229 542l5-5 5 5-5 5zM201 542h4', 'class': 'ruler'});
label('0', 207, 542).setAttribute('class', 'zero');
label('0', 234, 552).setAttribute('class', 'zero');

// component bodies
[[420, 296, 18, 33], [443, 296, 18, 33], [466, 294, 32, 27], [502, 293, 24, 28], [530, 296, 17, 33], [552, 296, 18, 33],
 [420, 346, 18, 33], [443, 346, 18, 33], [466, 355, 32, 26], [502, 344, 24, 28], [530, 346, 17, 33], [552, 346, 18, 33],
 [430, 418, 33, 16], [493, 418, 33, 16], [432, 443, 34, 17], [493, 443, 33, 17],
 [420, 181, 5, 10], [456, 222, 5, 10], [550, 410, 6, 10], [585, 464, 5, 10],
 [426, 470, 6, 9], [439, 470, 6, 9], [452, 470, 6, 9], [464, 470, 6, 9],
 [487, 470, 6, 9], [500, 470, 6, 9], [512, 470, 6, 9], [525, 470, 6, 9],
 [472, 152, 10, 7], [475, 236, 10, 7], [477, 390, 10, 7]].forEach(function (b) {
    ghost(b[0], b[1], b[2], b[3]);
});

// single pads
[['b', 341, 145, 8, 9], ['g', 358, 145, 7, 9], ['w', 341, 161, 8, 9], ['o', 358, 161, 7, 9],
 ['b', 314, 173, 6, 6], ['o', 324, 173, 7, 6], ['w', 325, 174, 4, 4], ['b', 349, 175, 6, 7], ['o', 360, 175, 6, 7],
 ['b', 375, 166, 15, 19], ['b', 375, 189, 15, 19], ['o', 407, 166, 15, 19], ['o', 407, 189, 15, 19],
 ['r', 524, 161, 15, 19], ['r', 524, 183, 15, 20], ['m', 524, 207, 15, 19], ['m', 524, 229, 15, 19],
 ['b', 557, 161, 15, 19], ['b', 557, 183, 15, 20], ['b', 557, 206, 15, 19], ['b', 557, 229, 15, 19],
 ['w', 509, 218, 7, 17], ['l', 430, 251, 19, 14], ['w', 457, 251, 20, 14], ['w', 480, 251, 20, 14], ['w', 502, 251, 16, 11],
 ['l', 502, 271, 16, 11], ['w', 430, 283, 19, 15], ['w', 457, 283, 20, 15], ['w', 480, 283, 20, 15],
 ['l', 456, 311, 6, 6], ['l', 467, 311, 6, 6], ['l', 484, 311, 6, 6], ['l', 494, 311, 6, 6],
 ['m', 456, 321, 6, 7], ['w', 466, 321, 7, 7], ['w', 484, 321, 7, 7], ['r', 493, 321, 7, 7],
 ['b', 514, 317, 7, 6], ['o', 524, 317, 7, 6], ['l', 418, 425, 7, 6], ['m', 428, 425, 7, 6],
 ['r', 476, 431, 7, 6], ['l', 476, 440, 7, 7]].forEach(function (p) {
    pad(p[0], p[1], p[2], p[3], p[4]);
});

// QFP chip
pad('b', 312, 201, 36, 36, 0);
row('gwbobowg', 312.3, 189, 5.06, 3.4, 9);
row('gggwwwgg', 312.3, 239, 5.06, 3.4, 9);
column('gggggwwg', 301, 201, 5.1, 9, 3.4);
column('ggwwgwwg', 351, 201, 5.1, 9, 3.4);
add('text', {transform: 'translate(328 218) rotate(-90)'}, 'DGND');
add('text', {transform: 'translate(336 218) rotate(-90)'}, 'THRMPAD');

// BGA
['wwwwwoww', 'wwwwwbww', 'obgboggg', 'wwo  bgg', 'wwb  obo', 'wwgllgww', 'bomwrllw', 'wwmwrwll'].forEach(function (s, i) {
    row(s, 436, 167.7 + i * 8.1, 8.1, 4.6, 4.6, 2.3);
});

// pin rows
row('wwwwwmwmrwrbwwwo', 429.3, 334, 6.57, 4.4, 14, 1.5);
row('llwlwlwwwwlwlwll', 429.3, 408, 6.57, 4.4, 14, 1.5);
row('mwww', 429, 435, 12.8, 6.6, 17);
row('rwww', 489.5, 435, 12.9, 6.6, 17);
row('wwwr', 429, 491, 12.8, 6.6, 17);
row('wwwm', 489.5, 491, 12.9, 6.6, 17);
column('wwwwlbwwor', 691, 187, 5.1, 8, 3);
column('wbwwwlbwor', 726, 187, 5.1, 8, 3);

// CN1 holes
[[592, 415], [543, 454], [592, 456], [545, 489], [592, 489]].forEach(function (h, i) {
    ghost(h[0], h[1], 13, 20);
    add('rect', {x: h[0] + 2, y: h[1] + 2, width: 9, height: 16, rx: 4.5, fill: '#a29dd0', stroke: i == 4 ? '#7f9fe6' : col.w, 'stroke-width': 2.600});
});
add('path', {d: 'M593 493l5-3M593 498l12-7M593 503l12-8M594 507l11-7M600 508l5-3', stroke: '#e6ebff', 'stroke-width': 0.7});
[407, 493].forEach(function (cy) {
    add('circle', {cx: 574, cy: cy, r: 5.6, fill: '#9c97cc', stroke: '#a3416c'});
});
add('path', {d: 'M435 255h1M441 254h1M446 257h1M437 261h1M443 260h1', stroke: '#234a9c'});

[['PAD2', 300, 147], ['PAD1', 323, 147], ['IC6', 353, 158], ['C16', 322, 176], ['C43', 358, 178],
 ['C33', 398, 175], ['C34', 398, 198], ['C13', 423, 186], ['C11', 477, 155], ['IC1', 465, 198],
 ['C12', 493, 190], ['C15', 459, 227], ['C14', 480, 240], ['C36', 548, 170], ['C35', 548, 193],
 ['R11', 532, 205], ['C37', 548, 216], ['C38', 548, 239], ['CN2', 713, 211], ['C6', 510, 267],
 ['R12', 426, 277], ['C17', 439, 274], ['TH1', 447, 277], ['C3', 467, 274], ['C4', 490, 274], ['C26', 490, 282],
 ['C31', 429, 312], ['C22', 452, 312], ['Q1', 482, 307], ['L1', 514, 307], ['C8', 538, 312], ['C7', 561, 312],
 ['C19', 460, 320], ['R8', 470, 320], ['R9', 487, 320], ['C18', 498, 320], ['C20', 523, 320],
 ['C23', 475, 338], ['C32', 490, 338], ['C25', 429, 363], ['C28', 452, 363], ['Q2', 482, 368], ['IC2', 479, 377],
 ['L2', 514, 357], ['C9', 538, 363], ['C10', 561, 363], ['PAD3', 591, 303], ['PAD4', 591, 325],
 ['PAD5', 591, 348], ['PAD6', 591, 370], ['C29', 482, 393], ['R10', 553, 415], ['C1', 446, 426], ['C2', 510, 426],
 ['C40', 426, 429], ['C41', 480, 439], ['C24', 449, 451], ['C21', 510, 451], ['CN1', 575, 447], ['C5', 587, 469],
 ['IC3', 448, 471], ['IC4', 509, 471], ['R1', 429, 474], ['R2', 442, 474], ['R3', 455, 474], ['C39', 467, 474],
 ['R6', 490, 474], ['R5', 503, 474], ['R4', 515, 474], ['C42', 528, 474]].forEach(function (t) {
    label(t[0], t[1], t[2]);
});
label('S7', 513, 226).setAttribute('class', 'dark');

// mouse pointer
add('path', {d: 'M251 324v17l4-3.500 3 6.500 3-1.500-3-6h5z', fill: '#fff', stroke: '#111', 'stroke-width': 1});

// name, visible, colour, dotted
var layers = [
    ['Board outline', 1, '#fff'], ['Layout Area', 1, '#cc2a20', 1], ['Hole', 1, '#cc2a20', 1],
    ['Rule Area', 0, '#7a4fc0', 1], ['Conductor-1', 1, '#fdf9cf'], ['Conductor-2', 0, '#fdf9cf'],
    ['Conductor-3', 0, '#fdf9cf'], ['Conductor-4', 0, '#fdf9cf'], ['Symbol-A', 0, '#fbf011'],
    ['Symbol-A-1', 0, '#fbf011'], ['Resist-A', 0, '#138213'], ['MetalMask-A', 0, '#b37410'],
    ['HeightLimit-A', 0, '#f3aeea'], ['CompArea-A', 0, '#d9d9b4', 1], ['Symbol-B', 0, '#fbf011'],
    ['Symbol-B-1', 0, '#fbf011'], ['Resist-B', 0, '#138213'], ['MetalMask-B', 0, '#b37410'],
    ['HeightLimit-B', 0, '#f3aeea'], ['CompArea-B', 1, '#8a8f8a'], ['Inhibit(plc)-TOP', 0, '#b9c4ee', 1],
    ['', 0, '#b9c4ee', 1]
];
function box(on, name) {
    return '<td><input type="checkbox" aria-label="' + name + '"' + (on ? ' checked' : '') + '></td>';
}
var html = '';
for (var i = 0; i < layers.length; i++) {
    var l = layers[i];
    html += '<tr><td><input type="radio" name="edit" aria-label="edit ' + l[0] + '"></td><td>' + l[0] + '</td>';
    html += box(l[1], 'show ' + l[0]);
    html += '<td><span class="chip' + (l[3] ? ' dots' : '') + '" style="background-color:' + l[2] + '"></span></td>';
    html += box(1, 'select ' + l[0]);
    if (i == 1 || i == 2) {
        html += '<td class="off"></td><td class="off"></td><td class="off"></td>';
    } else {
        html += box(1, 'set show ' + l[0]) + '<td><span class="chip"></span></td>' + box(0, 'set select ' + l[0]);
    }
    html += '</tr>';
}
document.getElementById('rows').innerHTML = html;
```
